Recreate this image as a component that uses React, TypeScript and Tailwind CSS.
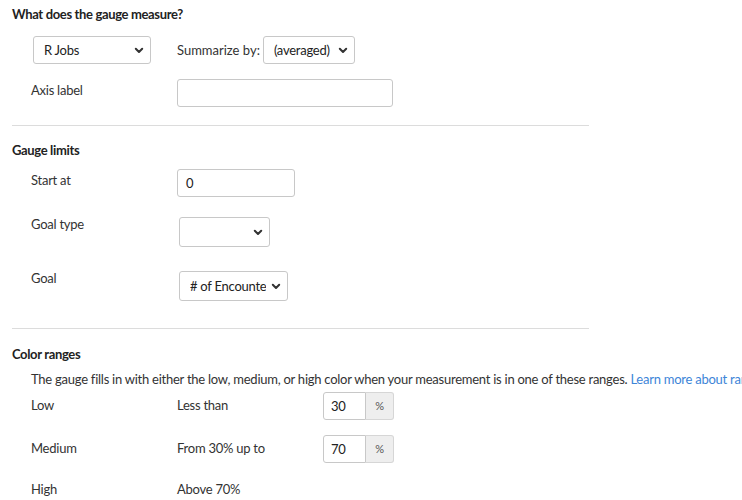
import type { ReactNode } from "react"

function Chevron() {
  return (
    <svg width="10" height="7" viewBox="0 0 10 7" className="shrink-0">
      <path d="M1.8 1.8 L5 5 L8.2 1.8" fill="none" stroke="#333" strokeWidth="2" strokeLinecap="round" strokeLinejoin="round" />
    </svg>
  )
}

function Select({ value, className }: { value: string; className: string }) {
  return (
    <div
      className={`flex items-center rounded-[3px] border border-[#c8c8c8] bg-white pl-[10px] pr-[6px] ${className}`}
    >
      <span className="mr-[5px] min-w-0 flex-1 overflow-hidden whitespace-nowrap text-[#222]">{value}</span>
      <Chevron />
    </div>
  )
}

function Row({ label, children, className = "", labelClass = "" }: { label: string; children: ReactNode; className?: string; labelClass?: string }) {
  return (
    <div className={`flex items-start pl-[19px] ${className}`}>
      <div className={`w-[146px] shrink-0 ${labelClass}`}>{label}</div>
      {children}
    </div>
  )
}

function PercentInput({ value }: { value: string }) {
  return (
    <div className="flex h-[28px]">
      <div className="flex w-[43px] items-center rounded-l-[3px] border border-[#c8c8c8] bg-white pl-[7px] text-[#222]">
        {value}
      </div>
      <div className="flex w-[28px] items-center justify-center rounded-r-[3px] border border-l-0 border-[#d6d6d6] bg-[#eeeeee] text-[11px] text-[#555]">
        %
      </div>
    </div>
  )
}

export default function App() {
  return (
    <div
      className="h-[500px] w-[742px] overflow-hidden bg-white pl-3 pt-[6px] text-[13px] leading-4 tracking-[-0.25px] text-[#333]"
      style={{ fontFamily: "Lato, 'Noto Sans', sans-serif" }}
    >
      <h3 className="font-bold tracking-[-0.35px] text-[#222]">What does the gauge measure?</h3>

      <div className="ml-[21px] mt-[14px] flex items-center">
        <Select value="R Jobs" className="h-[28px] w-[118px]" />
        <span className="ml-[26px] tracking-normal">Summarize by:</span>
        <Select value="(averaged)" className="ml-[3px] h-[28px] w-[92px]" />
      </div>

      <Row label="Axis label" className="mt-[15px]" labelClass="mt-[3px]">
        <div className="h-[28px] w-[216px] rounded-[3px] border border-[#c8c8c8] bg-white" />
      </Row>

      <div className="mt-[18px] h-px w-[577px] bg-[#dcdcdc]" />

      <h3 className="mt-4 font-bold tracking-[-0.35px] text-[#222]">Gauge limits</h3>

      <Row label="Start at" className="mt-[11px]" labelClass="mt-[3px]">
        <div className="flex h-[28px] w-[118px] items-center rounded-[3px] border border-[#c8c8c8] bg-white pl-[8px] text-[#222]">
          0
        </div>
      </Row>

      <Row label="Goal type" className="mt-[19px]">
        <Select value="" className="ml-[2px] mt-px h-[30px] w-[91px]" />
      </Row>

      <Row label="Goal" className="mt-[23px]">
        <Select value="# of Encounters" className="ml-[2px] mt-px h-[30px] w-[109px]" />
      </Row>

      <div className="mt-[27px] h-px w-[577px] bg-[#dcdcdc]" />

      <h3 className="mt-[17px] font-bold tracking-[-0.35px] text-[#222]">Color ranges</h3>

      <p className="mt-[9px] overflow-hidden whitespace-nowrap pl-[19px]">
        The gauge fills in with either the low, medium, or high color when your measurement is in one of these ranges.{" "}
        <a className="text-[#3d85d8]">Learn more about ranges</a>
      </p>

      <div className="mt-[5px] flex items-start pl-[19px]">
        <div className="mt-[5px] w-[146px] shrink-0">Low</div>
        <div className="mt-[5px] w-[146px] shrink-0">Less than</div>
        <PercentInput value="30" />
      </div>

      <div className="mt-[15px] flex items-start pl-[19px]">
        <div className="mt-[5px] w-[146px] shrink-0">Medium</div>
        <div className="mt-[5px] w-[146px] shrink-0">From 30% up to</div>
        <PercentInput value="70" />
      </div>

      <div className="mt-[18px] flex items-start pl-[19px]">
        <div className="w-[146px] shrink-0">High</div>
        <div className="w-[146px] shrink-0">Above 70%</div>
      </div>
    </div>
  )
}
